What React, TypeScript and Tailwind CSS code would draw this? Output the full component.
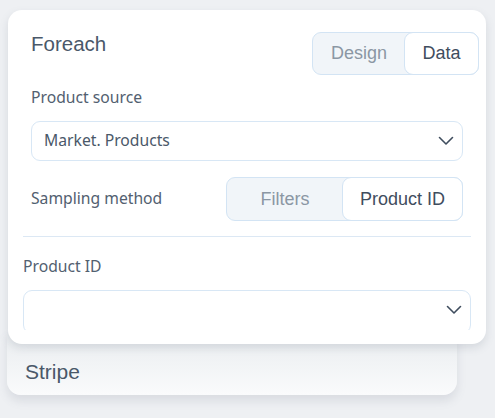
import React from "react";

function Chevron() {
  return (
    <svg width="16" height="10" viewBox="0 0 16 10" fill="none" className="shrink-0">
      <path d="M1.5 1.5 L8 8 L14.5 1.5" stroke="#3f4d5e" strokeWidth="1.6" strokeLinecap="round" strokeLinejoin="round" />
    </svg>
  );
}

function Toggle({ left, right, className }: { left: string; right: string; className: string }) {
  return (
    <div className={`flex rounded-[9px] border border-[#d3e4f4] bg-[#f1f5f9] font-['Liberation_Sans',Arial,sans-serif] text-[18px] ${className}`}>
      <div className="flex flex-1 items-center justify-center text-[#8b97a4]">{left}</div>
      <div className="-m-px flex items-center justify-center rounded-[9px] border border-[#d3e4f4] bg-white text-[#3f4d5e]">{right}</div>
    </div>
  );
}

export default function App() {
  return (
    <div className="h-[418px] w-[495px] overflow-hidden bg-[#eef0f3] pl-[8px] pt-[10px] font-['Noto_Sans',sans-serif]">
      <div className="relative z-10 flex h-[334px] w-[478px] flex-col overflow-hidden rounded-[14px] bg-white shadow-[0_4px_8px_rgba(100,110,125,0.18)]">
        <div className="flex h-[320px] flex-col overflow-hidden px-[15px]">
          <div className="-mr-[8px] flex items-start justify-between pl-[8px] pt-[23px]">
            <div className="font-['Liberation_Sans',Arial,sans-serif] text-[20.5px] leading-[22px] text-[#4a5869]">Foreach</div>
            <Toggle left="Design" right="Data" className="h-[43px] w-[167px] -mt-[1px] [&>div:last-child]:w-[75px]" />
          </div>
          <div className="px-[8px]">
            <div className="mt-[11px] text-[15.7px] leading-[22px] text-[#526070]">Product source</div>
            <div className="mt-[13px] flex h-[40px] items-center justify-between rounded-[9px] border border-[#d8e7f5] pl-[12px] pr-[8px]">
              <span className="text-[15.7px] text-[#4a5869]">Market. Products</span>
              <Chevron />
            </div>
            <div className="mt-[16px] flex items-center justify-between">
              <span className="text-[15.7px] text-[#526070]">Sampling method</span>
              <Toggle left="Filters" right="Product ID" className="h-[44px] w-[237px] [&>div:last-child]:w-[121px]" />
            </div>
          </div>
          <div className="mt-[15px] h-px shrink-0 bg-[#dce8f4]" />
          <div className="mt-[18px] text-[15.7px] leading-[22px] text-[#526070]">Product ID</div>
          <div className="mt-[13px] flex h-[44px] shrink-0 items-start justify-end rounded-[9px] border border-[#d8e7f5] pr-[8px] pt-[14px]">
            <Chevron />
          </div>
        </div>
      </div>
      <div className="-mt-[12px] ml-[-1px] flex h-[63px] w-[450px] items-end rounded-b-[14px] bg-gradient-to-b from-[#e9ecef] to-[#fafbfc] pb-[12px] pl-[18px] shadow-[0_6px_10px_rgba(100,110,125,0.15)]">
        <span className="font-['Liberation_Sans',Arial,sans-serif] text-[21px] leading-[22px] text-[#4a5869]">Stripe</span>
      </div>
    </div>
  );
}
